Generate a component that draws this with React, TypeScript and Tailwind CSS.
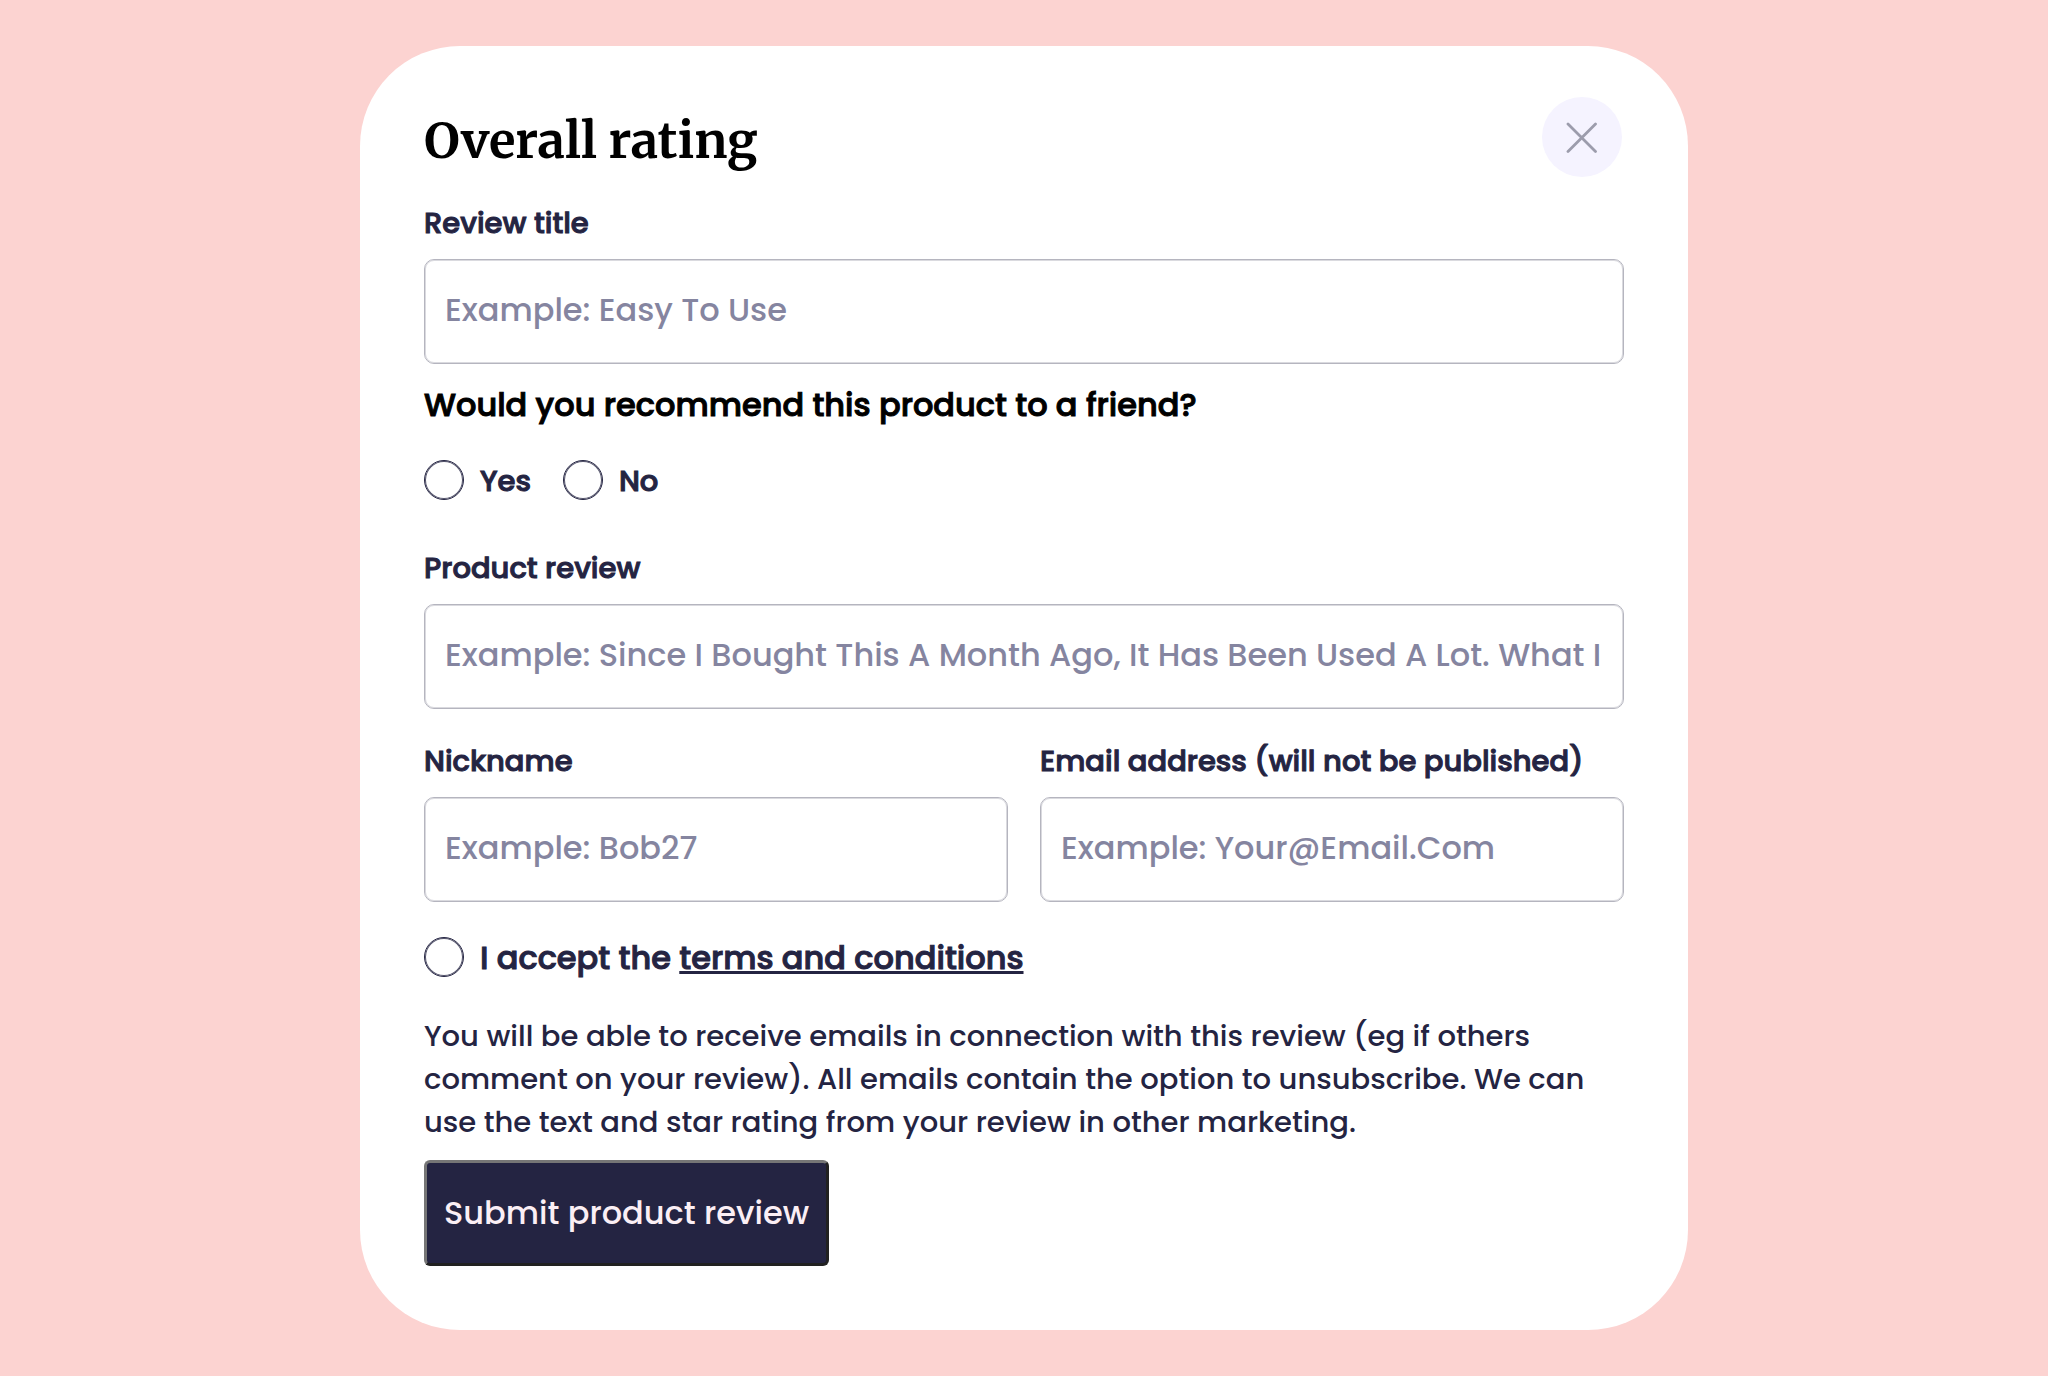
import { useId, type ReactNode } from "react";

const font = "font-[Poppins,Inter,'Open_Sans',sans-serif]";

function Field({ label, placeholder, type = "text" }: { label: string; placeholder: string; type?: string }) {
  const id = useId();
  return (
    <div className="flex min-w-0 flex-1 flex-col gap-[14px]">
      <label htmlFor={id} className="text-[29px] leading-[44px] font-medium whitespace-nowrap text-[#242442] [-webkit-text-stroke:1px]">
        {label}
      </label>
      <input
        id={id}
        type={type}
        placeholder={placeholder}
        className="h-[105px] w-full rounded-[10px] border border-[#b5b5bf] bg-white px-5 pb-1 text-[32px] font-medium text-[#242442] shadow-[inset_0_0_0_1px_#b5b5bf80] outline-none placeholder:text-[#8585a0]"
      />
    </div>
  );
}

function Choice({ name, type = "radio", textClass, children }: { name: string; type?: "radio" | "checkbox"; textClass: string; children: ReactNode }) {
  const id = useId();
  return (
    <div className="flex items-center gap-4">
      <input
        id={id}
        type={type}
        name={name}
        className="size-10 shrink-0 appearance-none rounded-full border border-[#242442] bg-white shadow-[inset_0_0_0_1px_#242442cc] checked:border-[12px]"
      />
      <label htmlFor={id} className={textClass}>
        {children}
      </label>
    </div>
  );
}

export default function App() {
  return (
    <main className={`flex min-h-screen items-center justify-center bg-[#fcd3d1] py-[45px] ${font}`}>
      <form
        onSubmit={(e) => e.preventDefault()}
        className="flex w-full max-w-[1328px] flex-col rounded-[100px] bg-white px-16 pt-[51px] pb-16"
      >
        <header className="flex items-center justify-between">
          <h1 className="pt-2 font-[Merriweather,'DejaVu_Serif_Condensed','DejaVu_Serif',serif] text-[49px] leading-[60px] font-bold text-black">
            Overall rating
          </h1>
          <button type="button" aria-label="Close" className="mr-0.5 flex size-20 items-center justify-center rounded-full bg-[#f5f3ff]">
            <svg viewBox="0 0 32 32" className="size-8" fill="none" stroke="#9c9cac" strokeWidth="2.8" strokeLinecap="round">
              <path d="M2 3 29.5 30.5M29.5 3 2 30.5" />
            </svg>
          </button>
        </header>

        <div className="mt-6 flex">
          <Field label="Review title" placeholder="Example: Easy To Use" />
        </div>

        <fieldset className="mt-4">
          <legend className="text-[32px] leading-[50px] font-medium text-black [-webkit-text-stroke:1px]">
            Would you recommend this product to a friend?
          </legend>
          <div className="mt-[30px] flex gap-8">
            <Choice name="recommend" textClass="pt-0.5 text-[29px] leading-[38px] font-medium text-[#242442] [-webkit-text-stroke:1px]">Yes</Choice>
            <Choice name="recommend" textClass="pt-0.5 text-[29px] leading-[38px] font-medium text-[#242442] [-webkit-text-stroke:1px]">No</Choice>
          </div>
        </fieldset>

        <div className="mt-[46px] flex">
          <Field
            label="Product review"
            placeholder="Example: Since I Bought This A Month Ago, It Has Been Used A Lot. What I"
          />
        </div>

        <div className="mt-[30px] flex gap-8">
          <Field label="Nickname" placeholder="Example: Bob27" />
          <Field label="Email address (will not be published)" type="email" placeholder="Example: Your@Email.Com" />
        </div>

        <div className="mt-[35px]">
          <Choice name="terms" type="checkbox" textClass="pt-0.5 text-[32px] leading-[38px] font-medium text-[#242442] [-webkit-text-stroke:1px]">
            I accept the{" "}
            <a href="#terms" className="underline decoration-[3px]">
              terms and conditions
            </a>
          </Choice>
        </div>

        <p className="mt-[38px] text-[29px] leading-[43px] font-medium text-[#242442]">
          You will be able to receive emails in connection with this review (eg if others comment on your review). All
          emails contain the option to unsubscribe. We can use the text and star rating from your review in other
          marketing.
        </p>

        <button
          type="submit"
          className="mt-4 h-[106px] self-start rounded-md border-[3px] border-t-[#767676] border-r-[#212121] border-b-[#212121] border-l-[#767676] bg-[#242442] px-[17px] text-[32px] font-medium text-[#fbeff5]"
        >
          Submit product review
        </button>
      </form>
    </main>
  );
}
